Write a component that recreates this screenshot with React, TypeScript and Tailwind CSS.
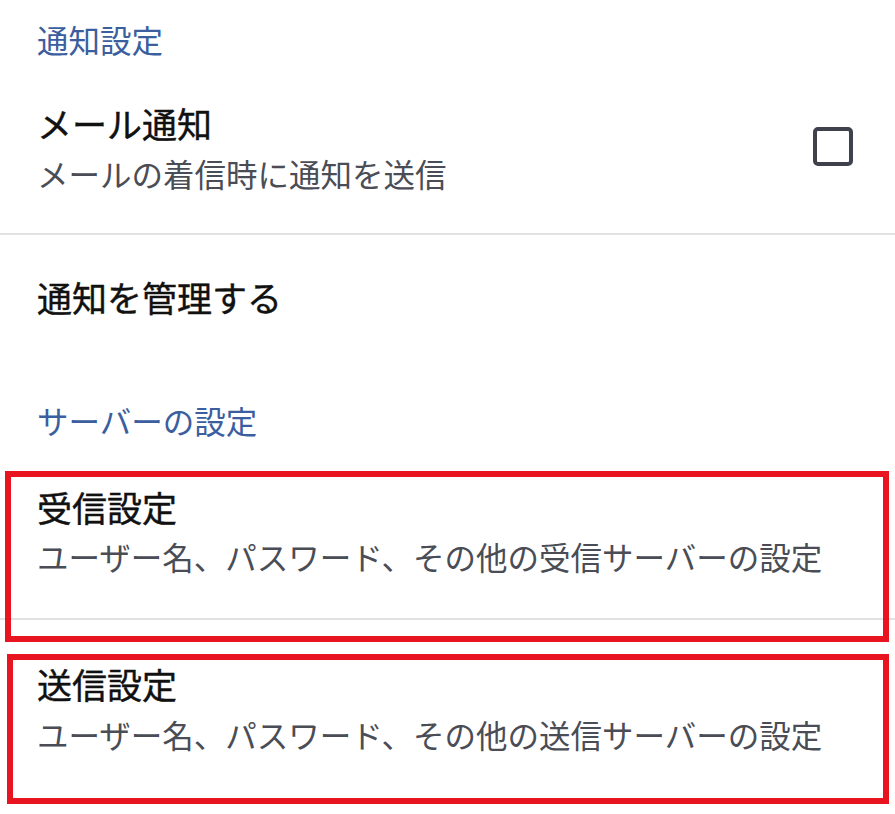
import React from "react";

const FONT = { fontFamily: '"Noto Sans CJK JP", "Noto Sans", sans-serif' };

function Header({ children, h }: { children: React.ReactNode; h: string }) {
  return (
    <div className={`flex items-center pl-[37px] text-[31.5px] leading-[40px] text-[#3b5e9f] ${h}`}>
      {children}
    </div>
  );
}

function Divider() {
  return <div className="h-[2px] w-full bg-[#e2e2e2]" />;
}

const TITLE = "text-[35px] font-normal leading-[40px] text-[#111111] [-webkit-text-stroke:0.4px_#111111]";
const SUB = "text-[31.5px] leading-[44px] text-[#4a4d55]";

export default function App() {
  return (
    <div className="relative h-[814px] w-[895px] overflow-hidden bg-white" style={FONT}>
      <Header h="h-[78px]">通知設定</Header>

      <div className="flex h-[155px] items-start justify-between pl-[37px] pr-[42px] pt-[25px]">
        <div className="flex flex-col gap-[8px]">
          <div className={TITLE}>メール通知</div>
          <div className={SUB}>メールの着信時に通知を送信</div>
        </div>
        <div className="mt-[24px] h-[39px] w-[40px] rounded-[5px] border-[4px] border-[#3f424c]" />
      </div>

      <Divider />

      <div className={`flex h-[124px] items-center pl-[37px] ${TITLE}`}>通知を管理する</div>

      <Header h="h-[122px]">サーバーの設定</Header>

      <div className="flex h-[137px] flex-col gap-[7px] pl-[37px] pt-[6px]">
        <div className={TITLE}>受信設定</div>
        <div className={SUB}>ユーザー名、パスワード、その他の受信サーバーの設定</div>
      </div>

      <Divider />

      <div className="flex flex-col gap-[8px] pl-[37px] pt-[44px]">
        <div className={TITLE}>送信設定</div>
        <div className={SUB}>ユーザー名、パスワード、その他の送信サーバーの設定</div>
      </div>

      <div className="pointer-events-none absolute left-[5px] top-[471px] h-[171px] w-[884px] border-[6px] border-[#e8141f]" />
      <div className="pointer-events-none absolute left-[7px] top-[654px] h-[150px] w-[882px] border-[6px] border-[#e8141f]" />
    </div>
  );
}
